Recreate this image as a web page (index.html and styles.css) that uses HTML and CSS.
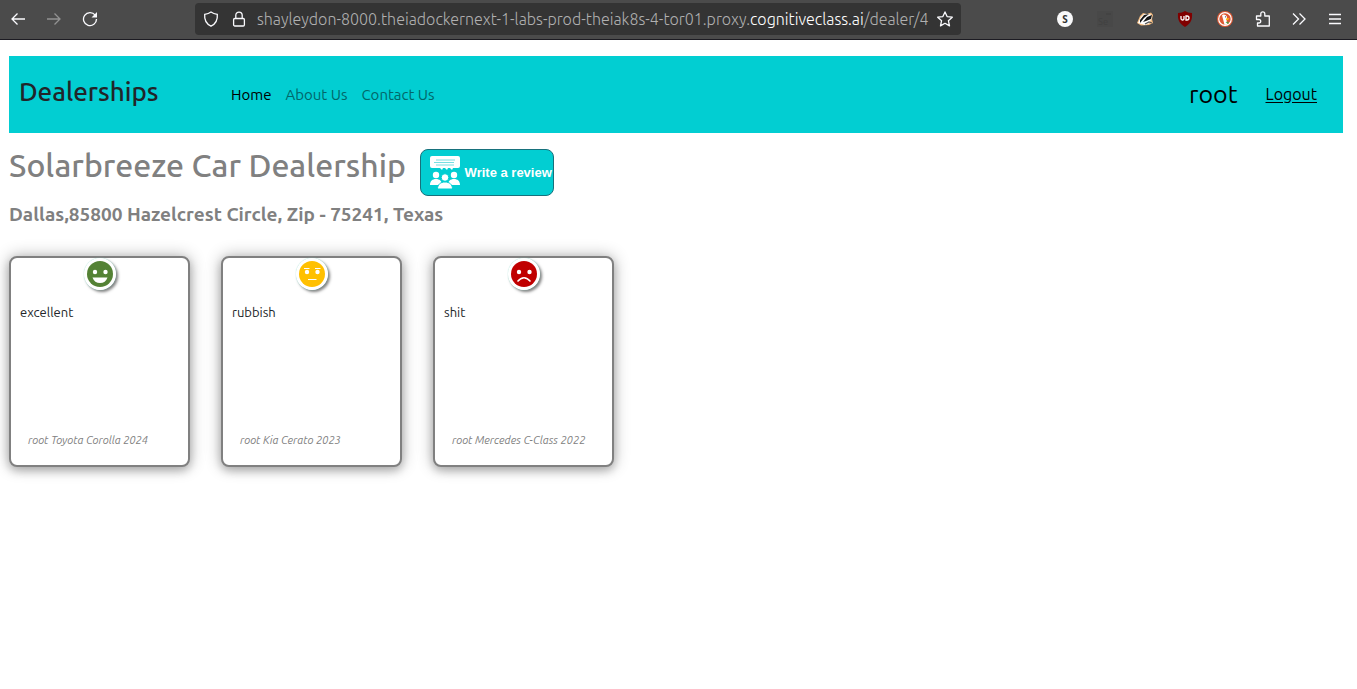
FILE: index.html
```html
<!DOCTYPE html>
<html lang="en">
<head>
<meta charset="utf-8">
<title>Dealerships</title>
<link rel="stylesheet" href="styles.css">
</head>
<body>
<div class="toolbar">
  <div class="history">
    <button class="tool" aria-label="Back"><svg viewBox="0 0 16 16" class="icon"><path d="M15 8H2M7.500 2.500 2 8l5.500 5.500"/></svg></button>
    <button class="tool dim" aria-label="Forward" disabled><svg viewBox="0 0 16 16" class="icon"><path d="M1 8h13M8.500 2.500 14 8l-5.500 5.500"/></svg></button>
    <button class="tool" aria-label="Reload"><svg viewBox="0 0 16 16" class="icon"><path d="M13.200 4.200A6.500 6.500 0 1 0 14.500 8"/><path d="M15 1v5.500H9.500z" fill="currentColor" stroke="none"/></svg></button>
  </div>
  <div class="address">
    <svg viewBox="0 0 16 16" class="icon"><path d="M8 1c2 1.500 4 2 6.300 2.300C14.800 8.500 12.500 13 8 15.200 3.500 13 1.200 8.500 1.700 3.300 4 3 6 2.500 8 1z"/></svg>
    <svg viewBox="0 0 16 16" class="icon"><rect x="2.600" y="7.500" width="10.800" height="7.500" rx="1.200"/><path d="M4.800 7.500v-3.200a3.200 3.200 0 0 1 6.400 0v3.200"/></svg>
    <span class="url">shayleydon-8000.theiadockernext-1-labs-prod-theiak8s-4-tor01.proxy.<span class="domain">cognitiveclass.ai</span>/dealer/4</span>
    <button class="star" aria-label="Bookmark"><svg viewBox="0 0 16 16" class="icon"><path d="m8 .9 2.100 4.700 5.200.6-3.900 3.500 1.100 5.200L8 12.300l-4.500 2.600 1.100-5.200L.7 6.200l5.200-.6z" stroke-linejoin="round"/></svg></button>
  </div>
  <div class="extensions">
    <button class="ext" aria-label="S extension"><svg viewBox="0 0 16 16" class="icon solid"><circle cx="8" cy="8" r="8" fill="#f9f9fa"/><text x="8" y="11.500" class="s-mark">S</text></svg></button>
    <button class="ext" aria-label="Selenium"><svg viewBox="0 0 16 16" class="icon solid"><path d="M0 0h16v16H0z" fill="#484848"/><path d="M9 3h5" stroke="#414141"/><text x="1" y="14" class="se-mark">Se</text></svg></button>
    <button class="ext" aria-label="Privacy Badger"><svg viewBox="0 0 16 16" class="icon solid"><path d="m0 12 3-7 3-3 4 1 4-1.500 2 2.500-1 4 1 4-4 2-8 .5z" fill="#f4bd82"/><path d="m1 12 3-6 3-3 7 .5 1 3-3 6-4 1.500z" fill="#fff"/><path d="m3 9 4-5 5-1-5 4-4 5zM6 11l4-5 5-2-1 4-5 2z" fill="#171717"/><path d="m8 13 4-2 3 1" fill="none" stroke="#555"/></svg></button>
    <button class="ext" aria-label="uBlock Origin"><svg viewBox="0 0 16 16" class="icon solid"><path d="M8 0c2 1.300 4 2 7 2 .4 6-.5 10-7 14C1.500 12 .6 8 1 2c3 0 5-.7 7-2z" fill="#800000"/><path d="M4 5v2.500Q4 9 5.500 9T7 7.500V5M9 5v4h1a2 2 0 0 0 0-4z" fill="none" stroke="#fff" stroke-width="1.300"/></svg></button>
    <button class="ext" aria-label="DuckDuckGo"><svg viewBox="0 0 16 16" class="icon solid"><circle cx="8" cy="8" r="8" fill="#de5833"/><circle cx="8" cy="8" r="6.300" fill="none" stroke="#fff" stroke-width="1.200"/><path d="M5 4.500Q6 3 8.500 4 10.500 5 10 8l-.5 2 1 3.500-3 .3L6 8z" fill="#fff"/><path d="m9 7.500 3.500-.5L11 9H9z" fill="#fdb813"/><path d="m8.500 11.500 3-1v2.500z" fill="#43a047"/><circle cx="8.500" cy="5.800" r=".6" fill="#245"/></svg></button>
    <button class="menu" aria-label="Extensions"><svg viewBox="0 0 16 16" class="icon"><path d="M1.500 5h4.300V2.800a2 2 0 0 1 4 0V5h4.500v10H2.500v-3H4a1.700 1.700 0 0 0 0-3.500H1.500z" stroke-linejoin="round"/></svg></button>
    <button class="menu" aria-label="More tools"><svg viewBox="0 0 16 16" class="icon"><path d="m2 2.500 5.500 5.500L2 13.500M8.500 2.500 14 8l-5.500 5.500"/></svg></button>
    <button class="menu" aria-label="Application menu"><svg viewBox="0 0 16 16" class="icon"><path d="M2 3.500h12M2 8h12M2 12.500h12"/></svg></button>
  </div>
</div>

<div class="page">
  <header class="site-header">
    <h2 class="brand">Dealerships</h2>
    <nav class="links">
      <a class="link active" href="#">Home</a>
      <a class="link" href="#">About Us</a>
      <a class="link" href="#">Contact Us</a>
    </nav>
    <span class="user">root</span>
    <a class="logout" href="#">Logout</a>
  </header>
  <main>
    <div class="title-row">
      <h1 class="title">Solarbreeze Car Dealership</h1>
      <a class="review-link" href="#">
        <svg viewBox="0 0 30 34" class="review-icon"><path d="M2 0h26q2 0 2 2v8q0 2-2 2h-5l-1 2-2-2h-2l-1 2-2-2h-2l-1 2-2-2H2q-2 0-2-2V2q0-2 2-2z" fill="#fff"/><path d="M6 4h19M4 6.500h20M6 9h18" stroke="#76dfe2"/><g fill="#fff"><circle cx="6" cy="19" r="3.200"/><circle cx="24" cy="19" r="3.200"/><path d="M0 29c0-4 2.500-6 6-6s6 2 6 6zM18 29c0-4 2.500-6 6-6s6 2 6 6z"/></g><g fill="#fff" stroke="#02ced2"><circle cx="15" cy="21.500" r="3.800"/><path d="M7.500 33c0-4.500 3-7 7.500-7s7.500 2.500 7.500 7z"/></g></svg>
        <span>Write a review</span>
      </a>
    </div>
    <h4 class="place">Dallas,85800 Hazelcrest Circle, Zip - 75241, Texas</h4>
    <section class="reviews">
      <article class="card">
        <svg viewBox="0 0 32 32" class="face" role="img" aria-label="Positive"><circle cx="16" cy="16" r="16" fill="#fff"/><circle cx="16" cy="16" r="13" fill="#548235"/><g fill="#fff"><circle cx="11" cy="14" r="2.200"/><circle cx="21.500" cy="14" r="2.200"/><path d="M8.500 19.500h15q-2 5.500-7.500 5.500t-7.500-5.500z"/></g></svg>
        <p class="comment">excellent</p>
        <p class="reviewer">root Toyota Corolla 2024</p>
      </article>
      <article class="card">
        <svg viewBox="0 0 32 32" class="face" role="img" aria-label="Neutral"><circle cx="16" cy="16" r="16" fill="#fff"/><circle cx="16" cy="16" r="13" fill="#ffc000"/><circle cx="11" cy="14" r="2.200" fill="#fff"/><circle cx="21.500" cy="14" r="2.200" fill="#fff"/><path d="M8 10.500h5.500M19 10.500h5.500M12 21.500h8.500" stroke="#fff" stroke-width="1.200"/></svg>
        <p class="comment">rubbish</p>
        <p class="reviewer">root Kia Cerato 2023</p>
      </article>
      <article class="card">
        <svg viewBox="0 0 32 32" class="face" role="img" aria-label="Negative"><circle cx="16" cy="16" r="16" fill="#fff"/><circle cx="16" cy="16" r="13" fill="#c00000"/><circle cx="11" cy="14" r="2.200" fill="#fff"/><circle cx="21.500" cy="14" r="2.200" fill="#fff"/><path d="M9.500 23.500q6.500-7.500 13 0" fill="none" stroke="#fff" stroke-width="1.400"/></svg>
        <p class="comment">shit</p>
        <p class="reviewer">root Mercedes C-Class 2022</p>
      </article>
    </section>
  </main>
</div>
</body>
</html>
```
FILE: styles.css
```css
* { box-sizing: border-box; }
body { margin: 0; background: #fff; color: #212529; font-family: Ubuntu, "Noto Sans", sans-serif; }
button { border: 0; padding: 0; background: none; color: inherit; display: grid; place-items: center; }
h1, h2, h4, p { margin: 0; }

.toolbar { display: flex; align-items: center; height: 40px; padding: 0 4px 2px 0; background: #4b4b4b; border-bottom: 1px solid #1c1b22; color: #fbfbfe; }
.history { display: flex; width: 195px; flex: none; }
.tool { width: 36px; height: 32px; }
.tool.dim { color: #929292; }
.icon { width: 16px; height: 16px; display: block; flex: none; fill: none; stroke: currentColor; stroke-width: 1.3; }
.icon.solid { stroke: none; }
.address { flex: 1; min-width: 0; display: flex; align-items: center; gap: 12px; height: 32px; padding: 0 8px; border-radius: 4px; background: #343434; }
.url { flex: 1; min-width: 0; margin-left: -2px; white-space: nowrap; font-size: 16px; font-weight: 300; line-height: 24px; color: #b0b0b0; }
.domain { color: #fff; }
.star { width: 16px; height: 16px; }
.extensions { display: flex; margin-left: 84px; }
.ext { width: 40px; height: 32px; }
.menu { width: 36px; height: 32px; }
.s-mark { font: bold 10px "Open Sans", sans-serif; text-anchor: middle; fill: #333; }
.se-mark { font: 9px "Open Sans", sans-serif; fill: #414141; }

.page { padding: 16px 14px 24px 9px; }
.site-header { display: flex; align-items: center; min-height: 77px; padding: 0 26px 0 10px; background: #02ced2; color: #000; }
.brand { width: 212px; padding-bottom: 6px; font-size: 26px; line-height: 32px; font-weight: 500; color: #212529; }
.links { display: flex; gap: 14px; margin-right: auto; }
.link { font-size: 15px; line-height: 24px; color: #016769; text-decoration: none; }
.link.active { color: #000; }
.user { margin-right: 28px; padding-bottom: 2px; font-size: 25px; line-height: 36px; }
.logout { padding-bottom: 2px; font-size: 16px; line-height: 24px; color: #000; text-underline-offset: 2px; }

.title-row { display: flex; align-items: flex-start; gap: 14px; margin-top: 16px; }
.title { font-size: 32px; line-height: 32px; font-weight: 500; color: #808080; }
.review-link { display: flex; align-items: center; justify-content: space-between; width: 134px; height: 47px; padding: 0 1px 0 9px; border: 1px solid #17717c; border-radius: 8px; background: #02ced2; color: #fff; font: bold 13px "Liberation Sans", sans-serif; white-space: nowrap; text-decoration: none; }
.review-icon { width: 30px; height: 34px; }
.place { margin-top: 6px; font-size: 19px; line-height: 24px; font-weight: 600; color: #808080; }

.reviews { display: flex; flex-wrap: wrap; gap: 31px; margin-top: 30px; }
.card { display: flex; flex-direction: column; width: 181px; height: 211px; padding: 0 9px 17px; border: 2px solid #808080; border-radius: 8px; background: #fff; box-shadow: 0 4px 8px rgba(0, 0, 0, .2), 0 0 16px rgba(0, 0, 0, .3); }
.face { width: 32px; height: 32px; align-self: center; border-radius: 50%; box-shadow: 0 0 1px #7fd8c4, 2px 2px 3px rgba(0, 0, 0, .5); }
.comment { margin-top: 12px; font-size: 13px; line-height: 20px; }
.reviewer { margin: auto 8px 0; font-size: 11px; line-height: 16px; font-style: italic; color: #808080; white-space: nowrap; }
```
